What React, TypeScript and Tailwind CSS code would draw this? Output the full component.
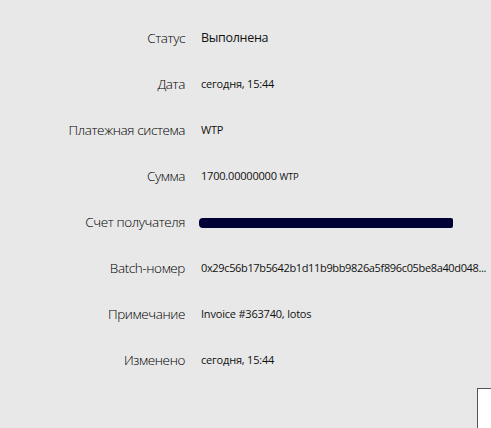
import React from "react";

const rows: { label: string; value: React.ReactNode }[] = [
  { label: "Статус", value: <span className="text-[12.5px] tracking-[-0.3px]">Выполнена</span> },
  { label: "Дата", value: "сегодня, 15:44" },
  { label: "Платежная система", value: "WTP" },
  {
    label: "Сумма",
    value: (
      <span>
        1700.00000000 <span className="text-[9.5px]">WTP</span>
      </span>
    ),
  },
  {
    label: "Счет получателя",
    value: <div className="-ml-[2px] mt-[1px] h-[10px] w-[254px] rounded-l-[4px] rounded-r-[2px] bg-[#000036]" />,
  },
  {
    label: "Batch-номер",
    value: <span className="tracking-[-0.35px]">0x29c56b17b5642b1d11b9bb9826a5f896c05be8a40d048...</span>,
  },
  { label: "Примечание", value: "Invoice #363740, lotos" },
  { label: "Изменено", value: "сегодня, 15:44" },
];

export default function App() {
  return (
    <div
      className="relative h-[428px] w-[491px] overflow-hidden bg-[#e8e8e8] pt-[15px]"
      style={{ fontFamily: "'Open Sans', 'Noto Sans', sans-serif" }}
    >
      {rows.map((r) => (
        <div key={r.label} className="flex h-[46px] items-center">
          <div className="w-[185px] shrink-0 text-right text-[13.5px] font-light tracking-[-0.4px] text-[#000]">
            {r.label}
          </div>
          <div className="ml-[16px] whitespace-nowrap text-[11px] tracking-[-0.2px] text-[#111]">{r.value}</div>
        </div>
      ))}
      <div className="absolute left-[477px] top-[388px] h-[60px] w-[40px] border border-[#555] bg-white" />
    </div>
  );
}
